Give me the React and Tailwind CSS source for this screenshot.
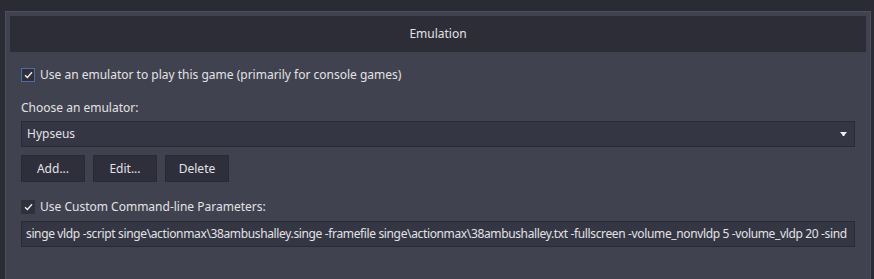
import React from "react";

function Check({ blue }) {
  return (
    <div
      className={`w-[14px] h-[14px] flex items-center justify-center bg-[#30303c] border ${
        blue ? "border-[#4a6da3]" : "border-[#30303c]"
      }`}
    >
      <svg width="9" height="8" viewBox="0 0 9 8">
        <path d="M1 4.2 L3.4 6.5 L8 1.2" fill="none" stroke="#f0f0f0" strokeWidth="1.3" />
      </svg>
    </div>
  );
}

export default function App() {
  const font = { fontFamily: '"Noto Sans", "Open Sans", sans-serif' };
  return (
    <div
      className="w-[874px] h-[279px] bg-[#2b2b36] pt-[11px] pl-[5px] pr-[3px] overflow-hidden text-[12px] text-[#e2e2e6]"
      style={font}
    >
      <div className="h-[280px] border border-[#4d4e5c] bg-[#41424f] p-[4px]">
        <div className="h-[36px] bg-[#2d2d38] flex items-center justify-center">Emulation</div>
        <div className="px-[11px]">
          <div className="mt-[14px] h-[18px] flex items-center gap-[5px]">
            <Check blue />
            <span>Use an emulator to play this game (primarily for console games)</span>
          </div>
          <div className="mt-[15px] h-[17px] flex items-center">Choose an emulator:</div>
          <div className="mt-[5px] h-[26px] bg-[#353643] border border-[#2a2a34] flex items-center justify-between pl-[5px] pr-[7px]">
            <span>Hypseus</span>
            <svg width="7" height="4" viewBox="0 0 7 4">
              <path d="M0 0 H7 L4.5 3 V4 H2.5 V3 Z" fill="#f2f2f2" />
            </svg>
          </div>
          <div className="mt-[8px] flex gap-[8px]">
            {["Add...", "Edit...", "Delete"].map((t) => (
              <div
                key={t}
                className="w-[64px] h-[27px] bg-[#2f2f3c] border border-[#2a2a34] flex items-center justify-center"
              >
                {t}
              </div>
            ))}
          </div>
          <div className="mt-[16px] h-[18px] flex items-center gap-[5px]">
            <Check />
            <span>Use Custom Command-line Parameters:</span>
          </div>
          <div className="mt-[5px] h-[26px] bg-[#353643] border border-[#2a2a34] flex items-center pl-[4px] overflow-hidden whitespace-nowrap tracking-[-0.36px]">
            singe vldp -script singe\actionmax\38ambushalley.singe -framefile singe\actionmax\38ambushalley.txt -fullscreen -volume_nonvldp 5 -volume_vldp 20 -sind
          </div>
        </div>
      </div>
    </div>
  );
}
